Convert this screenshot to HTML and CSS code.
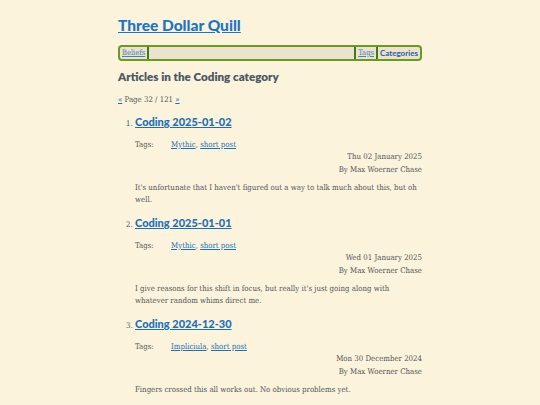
FILE: index.html
```html
<!DOCTYPE html>
<html lang="en">
<head>
<meta charset="utf-8">
<title>Three Dollar Quill</title>
<link rel="stylesheet" href="styles.css">
</head>
<body>
<div class="page">
  <h1 class="site-title"><a href="#">Three Dollar Quill</a></h1>
  <nav class="nav">
    <a class="nav-item" href="#">Beliefs</a>
    <span class="nav-fill"></span>
    <a class="nav-item nav-sep" href="#">Tags</a>
    <a class="nav-item nav-sep nav-current" href="#">Categories</a>
  </nav>
  <h2 class="page-heading">Articles in the Coding category</h2>
  <p class="pager"><a href="#">«</a> Page 32 / 121 <a href="#">»</a></p>
  <ol class="articles">
    <li class="article">
      <h3 class="article-title"><a href="#">Coding 2025-01-02</a></h3>
      <div class="tags"><span class="tags-label">Tags:</span><span><a href="#">Mythic</a>, <a href="#">short post</a></span></div>
      <div class="meta">Thu 02 January 2025<br>By Max Woerner Chase</div>
      <p class="summary">It's unfortunate that I haven't figured out a way to talk much about this, but oh well.</p>
    </li>
    <li class="article">
      <h3 class="article-title"><a href="#">Coding 2025-01-01</a></h3>
      <div class="tags"><span class="tags-label">Tags:</span><span><a href="#">Mythic</a>, <a href="#">short post</a></span></div>
      <div class="meta">Wed 01 January 2025<br>By Max Woerner Chase</div>
      <p class="summary">I give reasons for this shift in focus, but really it's just going along with whatever random whims direct me.</p>
    </li>
    <li class="article">
      <h3 class="article-title"><a href="#">Coding 2024-12-30</a></h3>
      <div class="tags"><span class="tags-label">Tags:</span><span><a href="#">Impliciula</a>, <a href="#">short post</a></span></div>
      <div class="meta">Mon 30 December 2024<br>By Max Woerner Chase</div>
      <p class="summary">Fingers crossed this all works out. No obvious problems yet.</p>
    </li>
  </ol>
</div>
</body>
</html>
```
FILE: styles.css
```css
html, body {
  margin: 0;
  padding: 0;
  background: #fbf3dc;
}
body {
  font-family: "DejaVu Serif", serif;
  font-stretch: condensed;
  font-size: 7.8px;
  color: #52575b;
}
a {
  color: #1f6fb8;
}
.page {
  width: 304px;
  margin: 0 auto;
  padding-top: 14px;
}
.site-title {
  font-family: Lato, "Open Sans", sans-serif;
  font-stretch: normal;
  font-weight: 900;
  font-size: 15.5px;
  line-height: 22px;
  margin: 0;
}
.site-title a {
  color: #1e73c4;
}
.nav {
  display: flex;
  align-items: stretch;
  margin-top: 9px;
  height: 12px;
  border: 2px solid #6a9a20;
  border-radius: 4px;
  background: #ebe3cd;
  line-height: 12px;
}
.nav-item {
  padding: 0 2px;
  font-size: 7.5px;
  color: #4a7fb8;
}
.nav-item:first-child {
  border-right: 2px solid #3f7a14;
}
.nav-fill {
  flex: 1;
}
.nav-sep {
  border-left: 2px solid #3f7a14;
}
.nav-current {
  font-family: Lato, "Open Sans", sans-serif;
  font-stretch: normal;
  font-weight: 700;
  font-size: 8px;
  text-decoration: none;
  color: #2a5f9e;
}
.page-heading {
  font-family: Lato, "Open Sans", sans-serif;
  font-stretch: normal;
  font-weight: 800;
  font-size: 11.6px;
  color: #4b5763;
  margin: 8px 0 0;
  line-height: 16px;
}
.pager {
  margin: 10px 0 0;
  line-height: 10px;
}
.articles {
  margin: 0;
  padding-left: 17px;
}
.article {
  padding-top: 9px;
}
.article-title {
  font-family: Lato, "Open Sans", sans-serif;
  font-stretch: normal;
  font-weight: 900;
  font-size: 11px;
  line-height: 16px;
  margin: 0;
}
.tags {
  display: flex;
  margin-top: 9px;
  line-height: 12px;
}
.tags-label {
  width: 36px;
}
.meta {
  text-align: right;
  line-height: 12.5px;
}
.summary {
  margin: 6px 0 0;
  line-height: 12px;
}
```
